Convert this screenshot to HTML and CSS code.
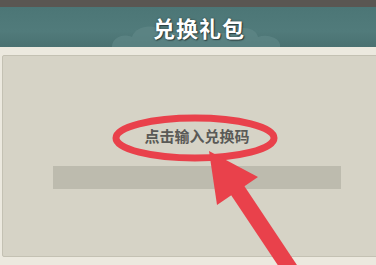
FILE: index.html
```html
<!DOCTYPE html>
<html lang="zh-CN">
<head>
    <meta charset="UTF-8">
    <meta name="viewport" content="width=device-width, initial-scale=1.0">
    <title>兑换礼包</title>
    <link rel="stylesheet" href="styles.css">
</head>
<body>
    <div class="screen">
        <div class="topbar"></div>

        <div class="header">
            <svg class="clouds" width="376" height="40" viewBox="0 0 376 40">
                <path d="M112 40 C112 30 124 26 132 30 C136 18 156 16 164 26 L230 26 C238 18 256 20 258 30 C268 26 282 32 280 40 Z" fill="#5f8787" opacity="0.7"/>
            </svg>
            <h1 class="title">兑换礼包</h1>
        </div>

        <div class="frame">
            <div class="panel">
                <p class="hint">点击输入兑换码</p>
                <div class="code-input"></div>
            </div>
        </div>

        <!-- red annotation drawn over the screenshot -->
        <svg class="mark" width="376" height="265" viewBox="0 0 376 265">
            <ellipse cx="195" cy="138" rx="79" ry="20" fill="none" stroke="#e9414b" stroke-width="7"/>
            <line x1="236" y1="188" x2="292" y2="272" stroke="#e9414b" stroke-width="16"/>
            <polygon points="209,151 258,177 217,205" fill="#e9414b"/>
        </svg>
    </div>
</body>
</html>
```

FILE: styles.css
```css
body {
    margin: 0;
    padding: 0;
    font-family: "Noto Sans CJK SC", "Noto Sans", sans-serif;
    background-color: #ece9df;
}
.screen {
    position: relative;
    width: 376px;
    height: 265px;
    overflow: hidden;
    background-color: #ece9df;
}
.topbar {
    height: 7px;
    background-color: #5a5652;
}
.header {
    position: relative;
    height: 40px;
    background: linear-gradient(#4c7676, #517b7b 60%, #4a7171);
    display: flex;
    align-items: center;
    justify-content: center;
}
.clouds {
    position: absolute;
    left: 0;
    top: 0;
}
.title {
    position: relative;
    margin: 0 0 0 22px;
    font-size: 22px;
    font-weight: bold;
    letter-spacing: 1px;
    color: #ffffff;
    text-shadow: 0 0 2px #2d3f3f, 1px 1px 1px #2d3f3f;
}
.frame {
    padding: 8px 0 5px 2px;
}
.panel {
    width: 390px;
    height: 202px;
    box-sizing: border-box;
    background-color: #d6d3c6;
    border: 1px solid #c4c1b3;
    border-radius: 2px;
    display: flex;
    flex-direction: column;
    align-items: center;
}
.hint {
    margin: 70px 0 0 0;
    font-size: 15px;
    font-weight: bold;
    line-height: 20px;
    color: #5a5a56;
}
.code-input {
    margin-top: 20px;
    width: 288px;
    height: 23px;
    background-color: #bdbbae;
}
.mark {
    position: absolute;
    left: 0;
    top: 0;
}
```
